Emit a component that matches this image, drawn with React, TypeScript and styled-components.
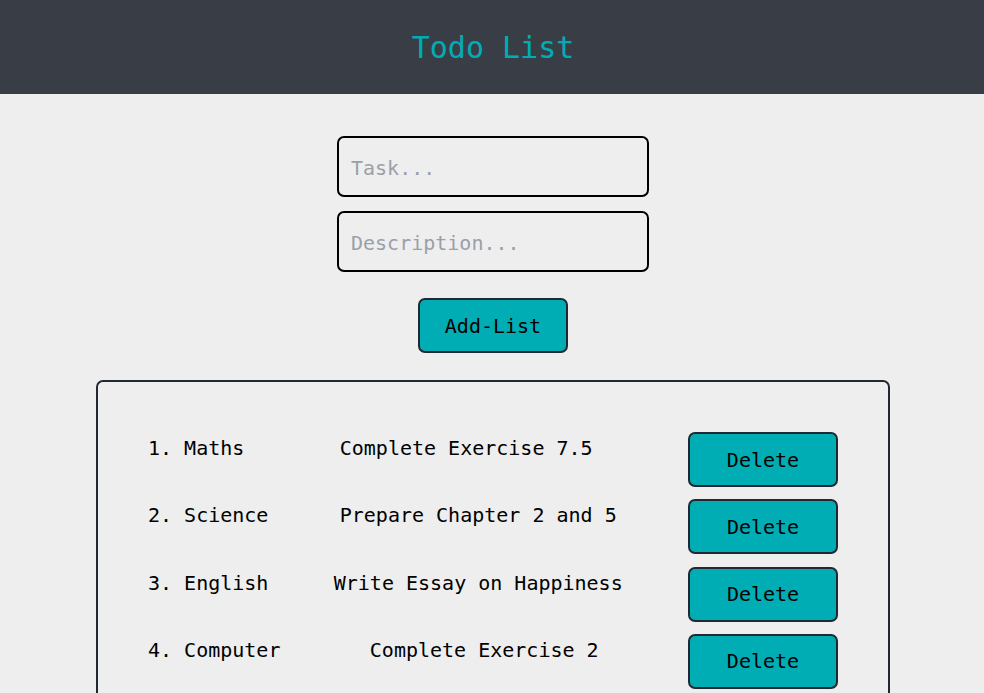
import * as React from 'react'
import styled, { createGlobalStyle } from 'styled-components'

const GlobalStyle = createGlobalStyle`
  body {
    margin: 0;
    background: #eeeeee;
    font-family: "DejaVu Sans Mono", "Liberation Mono", monospace;
  }
`

const Header = styled.header`
  height: 94px;
  background: #393e46;
  display: flex;
  align-items: center;
  justify-content: center;
`

const Title = styled.h1`
  margin: 0;
  font-size: 30px;
  font-weight: 400;
  color: #00adb5;
  padding-left: 2px;
`

const Main = styled.main`
  display: flex;
  flex-direction: column;
  align-items: center;
  padding-top: 42px;
  padding-left: 2px;
`

const Form = styled.div`
  display: flex;
  flex-direction: column;
  align-items: center;
  gap: 14px;
`

const Input = styled.input`
  box-sizing: border-box;
  width: 312px;
  height: 61px;
  border: 2px solid #000;
  border-radius: 7px;
  background: transparent;
  padding: 2px 12px 0;
  font-family: inherit;
  font-size: 20px;
  color: #222831;
  outline: none;
  &::placeholder {
    color: #9b9fa8;
  }
`

const Button = styled.button<{ $mt?: number }>`
  box-sizing: border-box;
  width: 150px;
  height: 55px;
  margin-top: ${(p) => p.$mt ?? 0}px;
  padding-top: 1px;
  flex-shrink: 0;
  background: #00adb5;
  border: 2px solid #222831;
  border-radius: 7px;
  font-family: inherit;
  font-size: 20px;
  color: #000;
  cursor: pointer;
`

const ListBox = styled.section`
  box-sizing: border-box;
  width: 794px;
  margin-top: 27px;
  border: 2px solid #222831;
  border-radius: 7px;
  padding: 50px 50px;
  display: flex;
  flex-direction: column;
  gap: 12.33px;
`

const Row = styled.div`
  display: flex;
  justify-content: space-between;
  align-items: flex-start;
`

const Cell = styled.span`
  font-size: 20px;
  line-height: 32px;
  color: #000;
  white-space: pre;
`

const todos = [
  { task: 'Maths', desc: 'Complete Exercise 7.5' },
  { task: 'Science', desc: 'Prepare Chapter 2 and 5' },
  { task: 'English', desc: 'Write Essay on Happiness' },
  { task: 'Computer', desc: 'Complete Exercise 2' },
]

export default function App() {
  return (
    <>
      <GlobalStyle />
      <Header>
        <Title>Todo List</Title>
      </Header>
      <Main>
        <Form>
          <Input placeholder="Task..." />
          <Input placeholder="Description..." />
          <Button $mt={12}>Add-List</Button>
        </Form>
        <ListBox>
          {todos.map((t, i) => (
            <Row key={t.task}>
              <Cell>{`${i + 1}. ${t.task}`}</Cell>
              <Cell>{t.desc}</Cell>
              <Button>Delete</Button>
            </Row>
          ))}
        </ListBox>
      </Main>
    </>
  )
}
